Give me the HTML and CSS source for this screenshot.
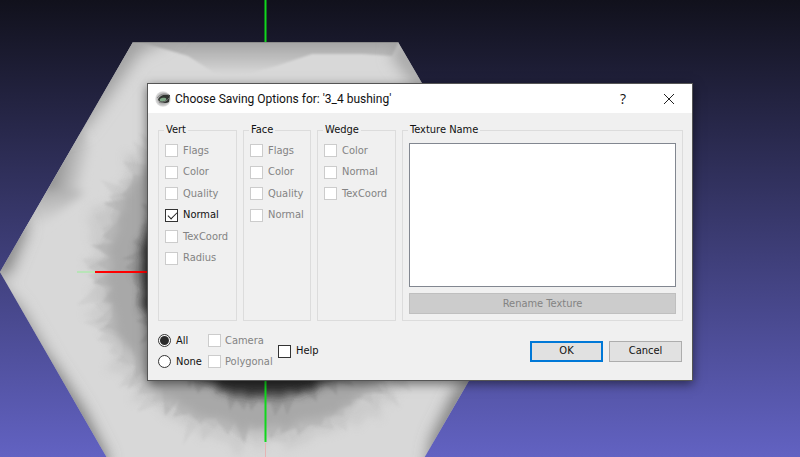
FILE: index.html
```html
<!DOCTYPE html>
<html lang="en">

<head>
    <meta charset="utf-8">
    <title>Choose Saving Options</title>
    <link rel="stylesheet" href="styles.css">
</head>

<body>
    <svg class="viewport" viewBox="0 0 800 457" preserveAspectRatio="xMinYMin slice" aria-hidden="true">
        <defs>
            <clipPath id="hexagon">
                <polygon points="0,272 133,42 398,42 532,272 398,503 133,503" />
            </clipPath>
            <filter id="soft" x="-50%" y="-50%" width="200%" height="200%">
                <feGaussianBlur stdDeviation="8" />
            </filter>
            <filter id="softer" x="-50%" y="-50%" width="200%" height="200%">
                <feGaussianBlur stdDeviation="4" />
            </filter>
            <filter id="edge">
                <feGaussianBlur stdDeviation="1" />
            </filter>
            <linearGradient id="fold" gradientUnits="userSpaceOnUse" x1="52" y1="170" x2="86" y2="178">
                <stop offset="0" stop-color="#909090" />
                <stop offset="1" stop-color="#d8d8d8" />
            </linearGradient>
            <linearGradient id="under" gradientUnits="userSpaceOnUse" x1="50" y1="186" x2="58" y2="222">
                <stop offset="0" stop-color="#a6a6a6" />
                <stop offset="1" stop-color="#d8d8d8" />
            </linearGradient>
            <linearGradient id="top" gradientUnits="userSpaceOnUse" x1="0" y1="42" x2="0" y2="74">
                <stop offset="0" stop-color="#a4a4a4" />
                <stop offset="1" stop-color="#d8d8d8" />
            </linearGradient>
        </defs>
        <g clip-path="url(#hexagon)">
            <rect width="540" height="457" fill="#d8d8d8" />
            <!-- shading along the outer faces -->
            <g filter="url(#edge)">
                <polygon points="134,40 266,40 276,66 226,80 188,56" fill="url(#top)" />
                <polygon points="230,40 400,40 392,56 362,54 312,54 276,66" fill="url(#top)" />
            </g>
            <g filter="url(#softer)">
                <polygon points="40,186 88,190 34,232 10,240" fill="url(#under)" />
                <polygon points="80,126 92,150 88,192 40,188 40,176" fill="url(#fold)" />
            </g>
            <g filter="url(#soft)">
                <polygon points="120,30 180,30 156,46 140,52 116,86 84,130 50,140" fill="#a0a0a0" />
                <polygon points="-12,272 16,210 28,226 8,276" fill="#808080" />
                <polygon points="-22,262 50,410 54,366 20,308" fill="#8c8c8c" />
                <polygon points="36,350 95,485 108,460 84,412 56,368" fill="#707070" />
                <polygon points="490,360 425,485 432,440 456,390" fill="#707070" />
                <polygon points="398,30 440,96 414,84 392,56" fill="#a0a0a0" />
            </g>
            <g id="bore" transform="translate(265 272)"></g>
        </g>
        <path d="M133 42.5H398" stroke="#8c8c8c" fill="none" />
        <path d="M265.5 0V42M265.5 370V442" stroke="#10d81c" stroke-width="2" fill="none" />
        <path d="M265.5 443V457" stroke="#e4b4b4" fill="none" />
        <path d="M77 272H96" stroke="#b8e4b8" stroke-width="2" />
        <path d="M95 272H160" stroke="#ff0000" stroke-width="2" />
    </svg>

    <form class="dialog">
        <header class="titlebar">
            <svg class="logo" viewBox="0 0 16 16" aria-hidden="true">
                <defs>
                    <radialGradient id="orb">
                        <stop offset="0" stop-color="#909090" />
                        <stop offset=".6" stop-color="#b0b0b0" />
                        <stop offset="1" stop-color="#e4e4e4" />
                    </radialGradient>
                </defs>
                <circle cx="8" cy="8" r="7.8" fill="url(#orb)" />
                <path d="M3 9C4 5 8 3 15 4L14 11C11 13 6 12 3 9Z" fill="#303430" />
                <path d="M2 7C5 3 10 2 14 4" stroke="#8a8a8a" fill="none" />
                <ellipse cx="8" cy="8.6" rx="3.4" ry="1.8" fill="#7fa886" transform="rotate(-12 8 8.6)" />
                <path d="M4 11C8 12 12 10 14 7" stroke="#777" fill="none" />
            </svg>
            <h1>Choose Saving Options for: '3_4 bushing'</h1>
            <button type="button" class="window-button" aria-label="What's this">?</button>
            <button type="button" class="window-button" aria-label="Close">
                <svg viewBox="0 0 12 12" aria-hidden="true"><path d="M1 1L11 11M11 1L1 11" stroke="#222" fill="none" /></svg>
            </button>
        </header>

        <div class="groups">
            <fieldset>
                <legend>Vert</legend>
                <div class="options">
                    <label><input type="checkbox" disabled>Flags</label>
                    <label><input type="checkbox" disabled>Color</label>
                    <label><input type="checkbox" disabled>Quality</label>
                    <label><input type="checkbox" checked>Normal</label>
                    <label><input type="checkbox" disabled>TexCoord</label>
                    <label><input type="checkbox" disabled>Radius</label>
                </div>
            </fieldset>
            <fieldset>
                <legend>Face</legend>
                <div class="options">
                    <label><input type="checkbox" disabled>Flags</label>
                    <label><input type="checkbox" disabled>Color</label>
                    <label><input type="checkbox" disabled>Quality</label>
                    <label><input type="checkbox" disabled>Normal</label>
                </div>
            </fieldset>
            <fieldset>
                <legend>Wedge</legend>
                <div class="options">
                    <label><input type="checkbox" disabled>Color</label>
                    <label><input type="checkbox" disabled>Normal</label>
                    <label><input type="checkbox" disabled>TexCoord</label>
                </div>
            </fieldset>
            <fieldset>
                <legend id="texture-name">Texture Name</legend>
                <div class="textures">
                    <select size="8" aria-labelledby="texture-name"></select>
                    <button type="button" disabled>Rename Texture</button>
                </div>
            </fieldset>
        </div>

        <footer class="actions">
            <div class="pair">
                <label><input type="radio" name="which" checked>All</label>
                <label><input type="radio" name="which">None</label>
            </div>
            <div class="pair">
                <label><input type="checkbox" disabled>Camera</label>
                <label><input type="checkbox" disabled>Polygonal</label>
            </div>
            <label class="help"><input type="checkbox">Help</label>
            <button type="submit" class="default">OK</button>
            <button type="button">Cancel</button>
        </footer>
    </form>
    <script src="script.js"></script>
</body>

</html>
```
FILE: styles.css
```css
* {
    box-sizing: border-box;
}

body {
    margin: 0;
    min-height: 100vh;
    overflow: hidden;
    color: #111;
    background: linear-gradient(#11111c, #6262c2);
    font: 11px/14px "DejaVu Sans Condensed", Tahoma, sans-serif;
}

.viewport {
    display: block;
    width: 100%;
    height: 100vh;
}

/* the dialog floats over the 3D view */
.dialog {
    position: absolute;
    top: 83px;
    left: 147px;
    width: 546px;
    background: #f0f0f0;
    border: 1px solid #555;
    box-shadow: 0 3px 10px rgba(0, 0, 0, .5);
}

.titlebar {
    display: flex;
    align-items: center;
    height: 29px;
    padding-left: 7px;
    background: #fff;
}

.logo {
    width: 16px;
    height: 16px;
    margin-right: 4px;
}

h1 {
    flex: 1;
    margin: 0;
    font: 12px/16px Roboto, "Segoe UI", sans-serif;
}

.window-button {
    display: flex;
    align-items: center;
    justify-content: center;
    width: 46px;
    height: 28px;
    padding: 0;
    border: 0;
    color: #111;
    background: none;
    font: 14px/16px "Open Sans", "Segoe UI", sans-serif;
}

.window-button svg {
    width: 12px;
    height: 12px;
}

.groups {
    display: grid;
    grid-template-columns: 79px 68px 79px 1fr;
    gap: 6px;
    padding: 10px 9px 0 10px;
}

fieldset {
    min-width: 0;
    height: 198px;
    margin: 0;
    padding: 0 6px;
    border: 1px solid #dcdcdc;
}

legend {
    margin-left: -1px;
    padding: 0 2px;
}

.options {
    display: grid;
    grid-template-rows: repeat(6, 1fr);
    height: 129px;
    margin-top: 3px;
}

label {
    display: flex;
    align-items: center;
    gap: 5px;
    white-space: nowrap;
}

label:has(:disabled) {
    color: #838383;
}

input {
    appearance: none;
    flex: none;
    width: 13px;
    height: 13px;
    margin: 0;
    border: 1px solid #333;
    background: #fff;
}

input:disabled {
    border-color: #ccc;
}

input[type="checkbox"]:checked::before {
    content: "";
    display: block;
    width: 8px;
    height: 4px;
    margin: 2px 0 0 2px;
    border: solid #222;
    border-width: 0 0 1px 1px;
    transform: rotate(-45deg);
}

input[type="radio"] {
    border-radius: 50%;
}

input[type="radio"]:checked::before {
    content: "";
    display: block;
    width: 9px;
    height: 9px;
    margin: 1px;
    border-radius: 50%;
    background: #2b2b2b;
}

.textures {
    display: flex;
    flex-direction: column;
    gap: 6px;
    margin-top: 6px;
}

select {
    height: 144px;
    border: 1px solid #828790;
    border-radius: 0;
    background: #fff;
}

button {
    height: 21px;
    padding: 0;
    border: 1px solid #adadad;
    color: #111;
    background: #e1e1e1;
    font: inherit;
}

button:disabled {
    border-color: #bfbfbf;
    color: #838383;
    background: #ccc;
}

.actions {
    display: flex;
    align-items: center;
    padding: 9px 10px 8px;
}

.pair {
    display: grid;
    grid-auto-rows: 21px;
    width: 50px;
}

.pair + .pair {
    width: 70px;
}

.pair + .pair label {
    gap: 4px;
}

.help {
    margin-right: auto;
}

.actions button {
    width: 73px;
    margin-left: 6px;
}

.actions .default {
    border: 2px solid #0078d7;
}
```
FILE: script.js
```javascript
const bore = document.getElementById('bore');

// cheap repeatable noise, so the jagged edge is the same on every load
let seed = 7;
const noise = () => {
    seed = (seed * 16807) % 2147483647;
    return seed / 2147483647;
};

// ring with irregular spikes between the two radii
const drawRing = (inner, outer, spikes, color, opacity, filter) => {
    const points = [];
    for (let i = 0; i < spikes; i++) {
        const angle = (i / spikes) * Math.PI * 2;
        const step = Math.PI / spikes;
        const far = inner + (outer - inner) * noise();
        const near = inner + (outer - inner) * noise() * 0.4;
        const tip = angle + step * noise() * 2;
        points.push([Math.cos(angle) * near, Math.sin(angle) * near]);
        points.push([Math.cos(tip) * far, Math.sin(tip) * far]);
    }
    const polygon = document.createElementNS('http://www.w3.org/2000/svg', 'polygon');
    polygon.setAttribute('points', points.map(p => p.map(Math.round).join(',')).join(' '));
    polygon.setAttribute('fill', color);
    polygon.setAttribute('opacity', opacity);
    polygon.setAttribute('filter', `url(#${filter})`);
    bore.appendChild(polygon);
};

drawRing(168, 190, 60, '#c0c0c0', 0.5, 'softer');
drawRing(158, 192, 70, '#c4c4c4', 0.4, 'edge');
drawRing(154, 182, 60, '#b8b8b8', 0.4, 'edge');
drawRing(150, 176, 64, '#a8a8a8', 0.4, 'edge');
drawRing(152, 164, 60, '#a8a8a8', 1, 'softer');
drawRing(124, 146, 70, '#909090', 0.5, 'edge');
drawRing(122, 134, 70, '#606060', 0.6, 'softer');
drawRing(120, 129, 60, '#333333', 1, 'softer');
```
